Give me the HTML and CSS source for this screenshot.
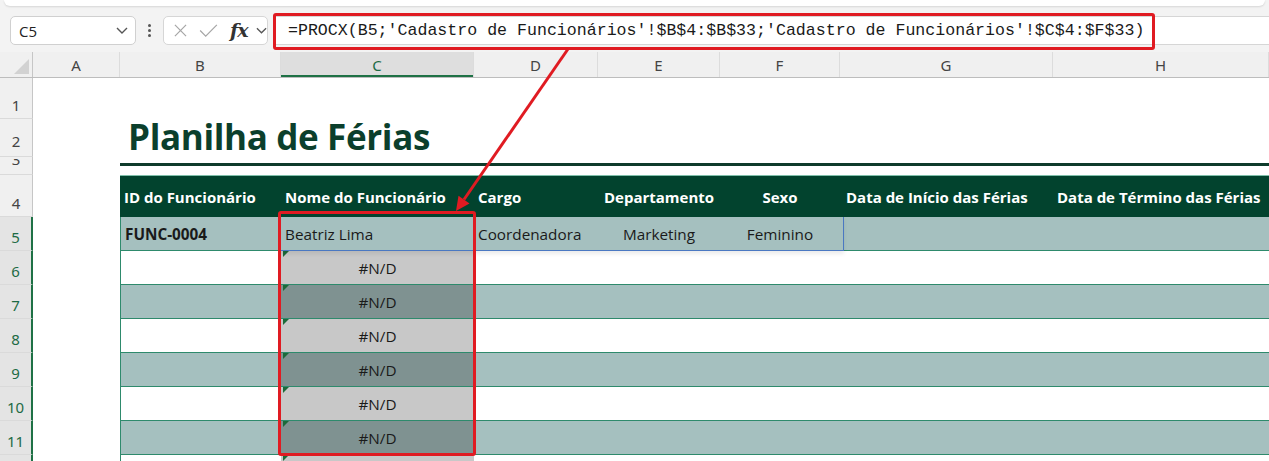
FILE: index.html
```html
<!DOCTYPE html>
<html lang="pt-BR">
<head>
<meta charset="utf-8">
<title>Planilha de Férias</title>
<link rel="stylesheet" href="styles.css">
</head>
<body>
<div class="app">
  <div class="ribbon-edge"></div>
  <div class="fbar">
    <div class="namebox"><span>C5</span><svg class="chev" viewBox="0 0 12 7" width="12" height="7"><path d="M1 1l5 5 5-5"/></svg></div>
    <div class="dots"><i></i><i></i><i></i></div>
    <div class="fnbox">
      <svg class="ic ic-x" viewBox="0 0 14 14" width="14" height="14"><path d="M1 1l12 12M13 1L1 13"/></svg>
      <svg class="ic ic-ok" viewBox="0 0 20 14" width="20" height="14"><path d="M1 7l6 6L19 1"/></svg>
      <span class="fx">fx</span>
      <svg class="chev chev-sm" viewBox="0 0 12 7" width="11" height="7"><path d="M1 1l5 5 5-5"/></svg>
    </div>
    <div class="formula">
      <span class="ftext">=PROCX(B5;'Cadastro de Funcionários'!$B$4:$B$33;'Cadastro de Funcionários'!$C$4:$F$33)</span>
      <div class="hl-formula"></div>
    </div>
  </div>

  <div class="sheet">
    <div class="row colhdr">
      <div class="corner"><span class="selall"></span></div>
      <div class="ch">A</div><div class="ch">B</div><div class="ch sel">C</div><div class="ch">D</div><div class="ch">E</div><div class="ch">F</div><div class="ch">G</div><div class="ch">H</div>
    </div>
    <div class="row r1"><div class="rh">1</div></div>
    <div class="row r2"><div class="rh rh2">2</div><div class="sp"></div><div class="title-cell"><h1 class="title">Planilha de Férias</h1></div></div>
    <div class="row r3"><div class="rh rh3"><span>3</span></div><div class="sp"></div><div class="rule"></div></div>
    <div class="row r4">
      <div class="rh">4</div><div class="sp"></div>
      <div class="hc">ID do Funcionário</div>
      <div class="hc">Nome do Funcionário</div>
      <div class="hc">Cargo</div>
      <div class="hc ctr">Departamento</div>
      <div class="hc ctr">Sexo</div>
      <div class="hc g">Data de Início das Férias</div>
      <div class="hc">Data de Término das Férias</div>
    </div>
    <div class="row data teal">
      <div class="rh on">5</div><div class="sp"></div>
      <div class="dc first b">FUNC-0004</div>
      <div class="dc">Beatriz Lima</div>
      <div class="dc">Coordenadora</div>
      <div class="dc ctr">Marketing</div>
      <div class="dc ctr">Feminino</div>
      <div class="dc"></div><div class="dc"></div>
    </div>
    <div class="row data plain">
      <div class="rh on">6</div><div class="sp"></div>
      <div class="dc first"></div><div class="dc err">#N/D</div><div class="dc"></div><div class="dc"></div><div class="dc"></div><div class="dc"></div><div class="dc"></div>
    </div>
    <div class="row data teal">
      <div class="rh on">7</div><div class="sp"></div>
      <div class="dc first"></div><div class="dc err">#N/D</div><div class="dc"></div><div class="dc"></div><div class="dc"></div><div class="dc"></div><div class="dc"></div>
    </div>
    <div class="row data plain">
      <div class="rh on">8</div><div class="sp"></div>
      <div class="dc first"></div><div class="dc err">#N/D</div><div class="dc"></div><div class="dc"></div><div class="dc"></div><div class="dc"></div><div class="dc"></div>
    </div>
    <div class="row data teal">
      <div class="rh on">9</div><div class="sp"></div>
      <div class="dc first"></div><div class="dc err">#N/D</div><div class="dc"></div><div class="dc"></div><div class="dc"></div><div class="dc"></div><div class="dc"></div>
    </div>
    <div class="row data plain">
      <div class="rh on">10</div><div class="sp"></div>
      <div class="dc first"></div><div class="dc err">#N/D</div><div class="dc"></div><div class="dc"></div><div class="dc"></div><div class="dc"></div><div class="dc"></div>
    </div>
    <div class="row data teal">
      <div class="rh on">11</div><div class="sp"></div>
      <div class="dc first"></div><div class="dc err">#N/D</div><div class="dc"></div><div class="dc"></div><div class="dc"></div><div class="dc"></div><div class="dc"></div>
    </div>
    <div class="row data plain last">
      <div class="rh on"></div><div class="sp"></div>
      <div class="dc first"></div><div class="dc err"></div><div class="dc"></div><div class="dc"></div><div class="dc"></div><div class="dc"></div><div class="dc"></div>
    </div>

    <div class="spill"></div>
    <div class="hl-range"></div>
  </div>

  <svg class="arrow" viewBox="0 0 1269 461" width="1269" height="461">
    <line x1="568" y1="49" x2="464" y2="199.5"/>
    <polygon points="456,211 469.5,203.5 458.5,195.8"/>
  </svg>
</div>
</body>
</html>
```

FILE: styles.css
```css
* { box-sizing: border-box; }
html, body { margin: 0; padding: 0; }
body {
  width: 1269px; height: 461px; overflow: hidden;
  background: #f3f3f3;
  font-family: "Open Sans", "Noto Sans", sans-serif;
  color: #222;
}
.app { position: relative; width: 1269px; height: 461px; overflow: hidden; }

.ribbon-edge {
  height: 6px; margin: 0 4px; background: #fff;
  border-radius: 0 0 8px 8px; box-shadow: 0 1px 2px rgba(0,0,0,.12);
}

.fbar { display: flex; align-items: flex-start; height: 46px; padding: 10px 0 0 10px; }
.namebox {
  flex: 0 0 126px; height: 29px; display: flex; align-items: center; justify-content: space-between;
  padding: 0 7px 0 8px; background: #fff; border: 1px solid #d0d0d0; border-radius: 5px;
  font: 15px "Open Sans", sans-serif; color: #222;
}
.chev { fill: none; stroke: #555; stroke-width: 1.4; }
.dots { flex: 0 0 27px; height: 29px; display: flex; flex-direction: column; align-items: center; justify-content: center; gap: 2px; }
.dots i { width: 3px; height: 3px; border-radius: 50%; background: #555; }
.fnbox {
  flex: 0 0 105px; height: 29px; display: flex; align-items: center;
  padding-left: 10px; background: #fff; border: 1px solid #d6d6d6; border-radius: 5px;
}
.ic { fill: none; stroke: #a6a6a6; stroke-width: 1.3; }
.ic-x { width: 13px; height: 13px; }
.ic-ok { margin-left: 12px; width: 19px; height: 13px; }
.fx { margin-left: 12px; font: italic 700 19px "DejaVu Serif", serif; color: #333; line-height: 1; letter-spacing: -1px; }
.chev-sm { margin-left: 8px; }

.formula {
  flex: 1; position: relative; height: 29px; margin-left: 5px;
  background: #fff; border-top: 1px solid #d6d6d6; border-bottom: 1px solid #d6d6d6;
  font: 16.6px "Liberation Mono", monospace; line-height: 27px; padding-left: 15px; white-space: nowrap; color: #1a1a1a;
}
.hl-formula { position: absolute; left: 0; top: -4px; width: 882px; height: 37px; border: 3px solid #e01b22; border-radius: 3px; }

.sheet { position: relative; background: #fff; height: 409px; }
.row { display: grid; grid-template-columns: 33px 87px 161px 193px 124px 122px 120px 213px 1fr; }

.colhdr { height: 26px; background: #f0f0f0; border-bottom: 1px solid #bdbdbd; }
.corner { display: flex; align-items: flex-end; justify-content: flex-end; padding: 0 3px 3px 0; border-right: 1px solid #c6c6c6; }
.selall { width: 0; height: 0; border-left: 15px solid transparent; border-bottom: 15px solid #d2d2d2; }
.ch {
  display: flex; align-items: center; justify-content: center;
  border-right: 1px solid #dcdcdc; font: 15px "Noto Sans", sans-serif; color: #444;
}
.ch.sel { background: #dedede; color: #1d6b45; box-shadow: inset 0 -2px 0 #1e7145; }

.r1 { height: 41px; }
.r2 { height: 38px; }
.r3 { height: 18px; }
.r4 { height: 42px; }
.data { height: 34px; }

.rh {
  display: flex; align-items: flex-end; justify-content: center; padding-bottom: 4px;
  background: #f0f0f0; border-right: 1px solid #c6c6c6; border-bottom: 1px solid #dadada;
  font: 15px "Noto Sans", sans-serif; color: #444; line-height: 18px;
}
.rh2 { padding-bottom: 6px; }
.rh.on { background: #e4e4e4; color: #1d6b45; border-right: 2px solid #1e7145; }
.rh3 { align-items: flex-start; padding: 2px 0 0; }
.rh3 span { display: block; height: 6px; overflow: hidden; line-height: 0; }

.title-cell { grid-column: 3 / -1; display: flex; align-items: flex-end; padding: 0 0 3px 8px; }
.title { margin: 0; font: 700 35px "Open Sans", sans-serif; letter-spacing: -0.35px; line-height: 1; color: #0b3f2c; white-space: nowrap; }
.rule { grid-column: 3 / -1; margin-top: 6px; height: 3px; background: #0e3b2b; }

.hc {
  display: flex; align-items: center; padding-left: 4px; white-space: nowrap;
  background: #02432e; border-top: 1px solid #7fbfaa; color: #fff; font: 700 15px "Open Sans", sans-serif;
}
.hc.ctr { justify-content: center; padding-left: 0; }
.hc.g { padding-left: 6px; }

.dc {
  display: flex; align-items: center; padding-left: 4px; white-space: nowrap;
  border-bottom: 1px solid #2e8a6c; font: 15.3px "Open Sans", sans-serif; color: #1a1a1a;
}
.dc.first { border-left: 1px solid #2e8a6c; }
.dc.b { font-weight: 700; }
.dc.ctr { justify-content: center; padding-left: 0; }
.teal .dc { background: #a5c0bf; }
.dc.err { position: relative; justify-content: center; padding-left: 0; }
.plain .dc.err { background: #c8c8c8; }
.teal .dc.err { background: #7f9291; }
.dc.err::before {
  content: ""; position: absolute; left: 2px; top: 0;
  border-top: 6px solid #1c6a3a; border-right: 6px solid transparent;
}

.spill {
  position: absolute; left: 281px; top: 165px; width: 563px; height: 34px;
  border-right: 1px solid #4a78c2; border-bottom: 1px solid #4a78c2;
  box-shadow: 0 3px 4px rgba(0,0,0,.08);
}
.hl-range {
  position: absolute; left: 278px; top: 159px; width: 198px; height: 245px;
  border: 3px solid #e01b22; border-radius: 3px;
}

.arrow { position: absolute; left: 0; top: 0; pointer-events: none; }
.arrow line { stroke: #e01b22; stroke-width: 3; }
.arrow polygon { fill: #e01b22; }
```
